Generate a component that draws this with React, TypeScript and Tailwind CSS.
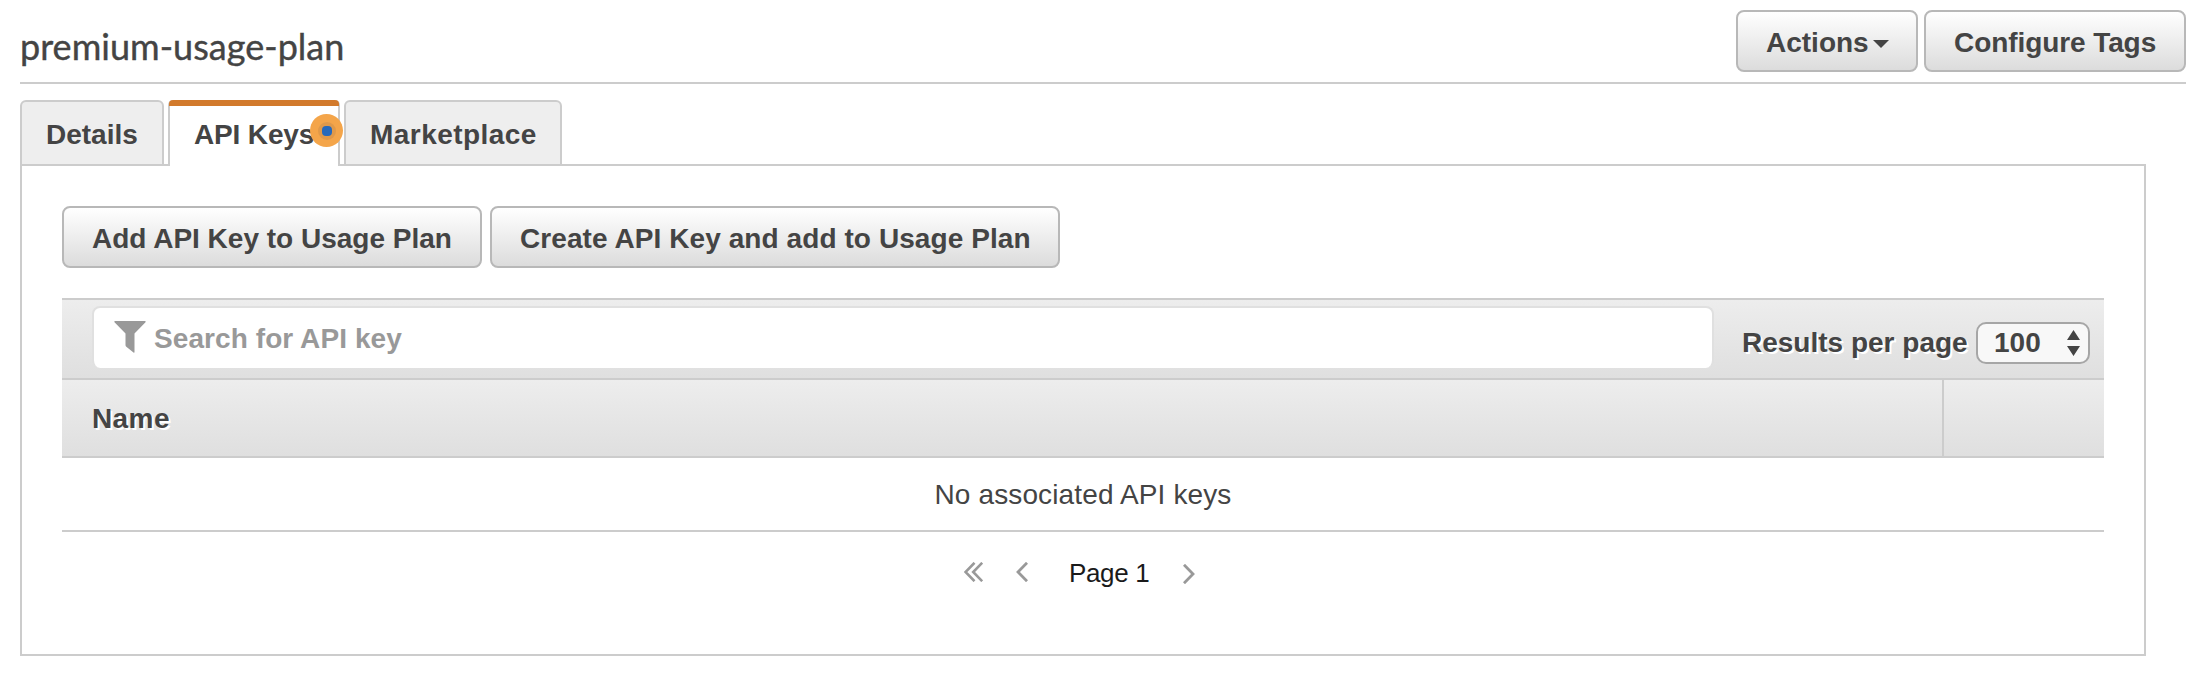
import type { ReactNode } from "react";

function Button({ children, className }: { children: ReactNode; className: string }) {
  return (
    <button
      type="button"
      className={`flex h-[62px] shrink-0 items-center whitespace-nowrap rounded-[8px] border-2 border-[#b8b8b8] bg-linear-to-b from-white to-[#dcdcdc] pt-[3px] text-[28px] leading-8 font-bold ${className}`}
    >
      {children}
    </button>
  );
}

function Header() {
  return (
    <header className="mx-4 ml-5 flex h-[84px] items-start justify-between border-b-2 border-[#cccccc]">
      <h1 className="mt-6 font-[Lato] text-[36px] leading-[44px] tracking-[0.03px] whitespace-nowrap [-webkit-text-stroke:0.4px_#444]">
        premium-usage-plan
      </h1>
      <div className="mt-[10px] flex gap-[6px]">
        <Button className="w-[182px] pl-7">
          <span>Actions</span>
          <svg className="mt-[3px] ml-1" width="16" height="8" viewBox="0 0 16 8">
            <path d="M0 0h16L8 8z" fill="#444" />
          </svg>
        </Button>
        <Button className="w-[262px] pl-7 tracking-[-0.08px]">Configure Tags</Button>
      </div>
    </header>
  );
}

function Tabs() {
  return (
    <nav className="relative z-10 mt-4 -mb-0.5 ml-5 flex h-[66px] gap-1 text-[28px] leading-8 font-bold">
      <div className="w-36 rounded-t-[6px] border-2 border-[#cccccc] bg-[#eeeeee] pt-[17px] pl-6">
        Details
      </div>
      <div className="relative w-[172px] rounded-t-[5px] border-x-2 border-[#cccccc] bg-white pt-[19px] pl-6 tracking-[-0.15px] whitespace-nowrap">
        <div className="absolute top-0 -right-px -left-px h-[6px] rounded-t-[4px] bg-[#d27a2c]" />
        API Keys
        <span className="absolute top-[14px] left-[140px] flex size-[33px] items-center justify-center rounded-full bg-[#f4a54a]">
          <span className="flex size-[18px] items-center justify-center rounded-full bg-[#e0994a]">
            <span className="size-[10px] rounded-[4px] bg-[#2769bb]" />
          </span>
        </span>
      </div>
      <div className="w-[218px] rounded-t-[6px] border-2 border-[#cccccc] bg-[#eeeeee] pt-[17px] pl-6 tracking-[0.45px]">
        Marketplace
      </div>
    </nav>
  );
}

function Toolbar() {
  return (
    <div className="flex h-20 border-t-2 border-[#cccccc] bg-linear-to-b from-[#ededed] to-[#dfdfdf]">
      <div className="mt-[6px] ml-[30px] flex h-[62px] w-[1622px] items-start rounded-[8px] border-2 border-b-0 border-[#e0e0e0] bg-white">
        <svg className="mt-[13px] ml-5 shrink-0" width="32" height="32" viewBox="0 0 32 32">
          <path
            d="M1 0h30q1.200 0 .5 1.200L20.500 12.500V31q0 1.200-1 .6L12.300 25.800q-.8-.7-.8-1.700V12.500L.5 1.200Q-.2 0 1 0z"
            fill="#999"
          />
        </svg>
        <span className="mt-[15px] ml-2 text-[28px] leading-8 font-bold tracking-[0.08px] whitespace-nowrap text-[#999999]">
          Search for API key
        </span>
      </div>
      <span className="mt-[27px] ml-7 w-[234px] text-[28px] leading-8 font-bold whitespace-nowrap [text-shadow:2px_2px_0_#fff]">
        Results per page
      </span>
      <div className="mt-[22px] flex h-[42px] w-[114px] items-center justify-between rounded-[10px] border-2 border-[#a6a6a6] bg-[#f8f8f8] pr-2 pl-[16px] text-[28px] leading-8 font-bold">
        <span>100</span>
        <svg width="13" height="26" viewBox="0 0 13 26">
          <path d="M6.500 0L13 10H0zM0 16h13L6.500 26z" fill="#444" />
        </svg>
      </div>
    </div>
  );
}

function Pager() {
  return (
    <div className="flex h-[122px] pt-[30px] pl-[902px]">
      <svg width="19" height="20" viewBox="0 0 19 20" fill="none" stroke="#999" strokeWidth="2.600">
        <path d="M10.500 .8L1.500 10l9 9.200M18.200 .8L9.200 10l9 9.200" />
      </svg>
      <svg className="ml-[33px]" width="12" height="20" viewBox="0 0 12 20" fill="none" stroke="#999" strokeWidth="2.800">
        <path d="M11 .8L2 10l9 9.200" />
      </svg>
      <span className="-mt-[5px] ml-[41px] w-[114px] text-[26px] leading-8 tracking-[-0.35px] whitespace-nowrap text-[#1a1a1a]">
        Page 1
      </span>
      <svg className="mt-0.5" width="12" height="20" viewBox="0 0 12 20" fill="none" stroke="#999" strokeWidth="2.800">
        <path d="M1 .8L10 10l-9 9.200" />
      </svg>
    </div>
  );
}

export default function App() {
  return (
    <main className="h-[676px] w-[2202px] bg-white font-['Liberation_Sans',Arial,sans-serif] text-[#444444]">
      <Header />
      <Tabs />
      <section className="ml-5 h-[492px] w-[2126px] border-2 border-[#cccccc] px-10 pt-10">
        <div className="mb-[30px] flex gap-2">
          <Button className="w-[420px] pl-7">Add API Key to Usage Plan</Button>
          <Button className="w-[570px] pl-7 tracking-[0.08px]">Create API Key and add to Usage Plan</Button>
        </div>
        <Toolbar />
        <div className="flex h-20 border-y-2 border-[#cccccc] bg-linear-to-b from-[#ededed] to-[#dfdfdf] text-[28px] leading-8 font-bold">
          <div className="w-[1882px] border-r-2 border-[#cccccc] pt-[23px] pl-[30px] tracking-[0.4px] [text-shadow:2px_2px_0_#fff]">
            Name
          </div>
        </div>
        <div className="h-[74px] border-b-2 border-[#cccccc] pt-[21px] text-center text-[28px] leading-8 tracking-[0.13px] whitespace-nowrap">
          No associated API keys
        </div>
        <Pager />
      </section>
    </main>
  );
}
